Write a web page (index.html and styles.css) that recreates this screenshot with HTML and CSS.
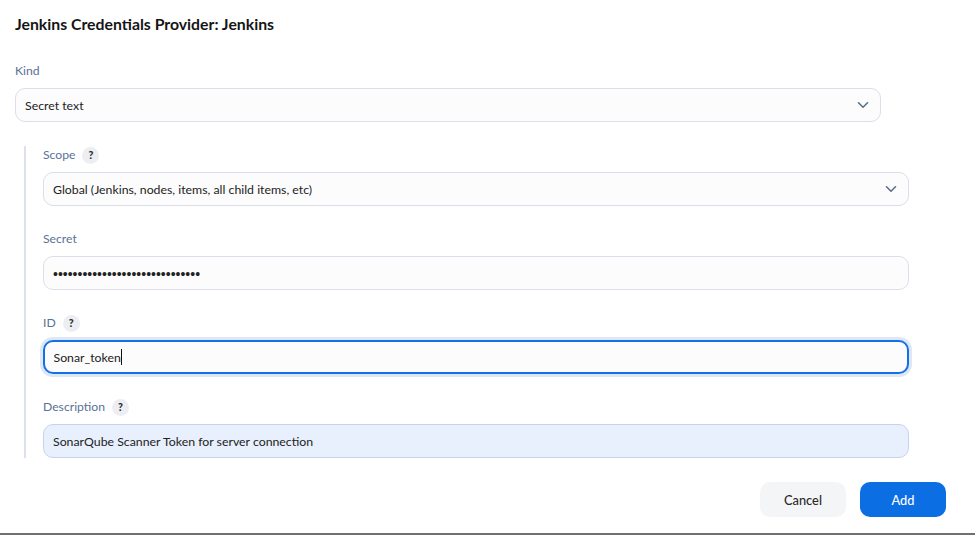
FILE: index.html
```html
<!DOCTYPE html>
<html lang="en">
<head>
<meta charset="utf-8">
<title>Jenkins Credentials Provider</title>
<link rel="stylesheet" href="styles.css">
</head>
<body>
<div class="dialog">
  <h1 class="title">Jenkins Credentials Provider: Jenkins</h1>
  <div class="form">
    <div class="field">
      <div class="label">Kind</div>
      <div class="control select">
        <span>Secret text</span>
        <svg class="chev" width="12" height="8" viewBox="0 0 12 8"><path d="M1.5 1.8 L6 6.2 L10.5 1.8" fill="none" stroke="#5b6f8e" stroke-width="1.6" stroke-linecap="round" stroke-linejoin="round"/></svg>
      </div>
    </div>
    <div class="nested">
      <div class="field">
        <div class="label">Scope <span class="help">?</span></div>
        <div class="control select">
          <span>Global (Jenkins, nodes, items, all child items, etc)</span>
          <svg class="chev" width="12" height="8" viewBox="0 0 12 8"><path d="M1.5 1.8 L6 6.2 L10.5 1.8" fill="none" stroke="#5b6f8e" stroke-width="1.6" stroke-linecap="round" stroke-linejoin="round"/></svg>
        </div>
      </div>
      <div class="field">
        <div class="label">Secret</div>
        <div class="control"><span class="dots">••••••••••••••••••••••••••••••</span></div>
      </div>
      <div class="field">
        <div class="label">ID <span class="help">?</span></div>
        <div class="control focused"><span>Sonar_token</span><span class="caret"></span></div>
      </div>
      <div class="field">
        <div class="label">Description <span class="help">?</span></div>
        <div class="control autofill"><span>SonarQube Scanner Token for server connection</span></div>
      </div>
    </div>
  </div>
  <div class="buttons">
    <button class="btn cancel">Cancel</button>
    <button class="btn add">Add</button>
  </div>
</div>
</body>
</html>
```
FILE: styles.css
```css
* { box-sizing: border-box; }
html, body { margin: 0; padding: 0; background: #fff; }
body {
  font-family: Lato, "Noto Sans", "Liberation Sans", sans-serif;
  color: #1f1f1f;
}
.dialog {
  height: 535px;
  border-bottom: 2px solid #707070;
  padding: 14px 0 0 15px;
  display: flex;
  flex-direction: column;
}
.title {
  margin: 0;
  font-size: 15.8px;
  font-weight: 700;
  line-height: 20px;
  color: #151515;
}
.form {
  margin-top: 28px;
  width: 895px;
  display: flex;
  flex-direction: column;
  gap: 24px;
}
.field {
  display: flex;
  flex-direction: column;
  width: 866px;
}
.label {
  height: 18px;
  line-height: 18px;
  font-size: 12.2px;
  color: #5a7296;
  margin-bottom: 8px;
  display: flex;
  align-items: center;
  gap: 7px;
}
.help {
  width: 17px;
  height: 17px;
  border-radius: 50%;
  background: #eceef3;
  color: #2a2a2a;
  font-size: 10.5px;
  font-weight: 900;
  display: inline-flex;
  align-items: center;
  justify-content: center;
  line-height: 1;
}
.control {
  height: 34px;
  border: 1.5px solid #d9e0ea;
  border-radius: 10px;
  background: #fcfcfd;
  display: flex;
  align-items: center;
  padding: 0 9px;
  font-size: 12.3px;
  color: #222;
}
.control > span:first-child { padding-top: 1px; }
.select { justify-content: space-between; padding-right: 11px; }
.chev { display: block; }
.dots {
  font-family: "Liberation Sans", sans-serif;
  font-size: 14px;
  letter-spacing: 0;
  color: #222;
}
.focused {
  border: 2px solid #1570e6;
  box-shadow: 0 0 0 3px #dce8f8;
  padding-left: 8.5px;
}
.caret {
  width: 1px;
  height: 16px;
  background: #111;
  margin-left: 0;
}
.autofill {
  background: #e8f0fd;
  border-color: #c6d4ea;
}
.nested {
  margin-left: 9px;
  border-left: 2px solid #dde2ea;
  padding-left: 17px;
  display: flex;
  flex-direction: column;
  gap: 24px;
}
.buttons {
  margin-top: 24px;
  width: 931px;
  display: flex;
  justify-content: flex-end;
  gap: 14px;
}
.btn {
  width: 86px;
  height: 35px;
  border: none;
  border-radius: 10px;
  font-family: Lato, "Noto Sans", "Liberation Sans", sans-serif;
  font-size: 12.8px;
  font-weight: 500;
}
.cancel { background: #f4f5f7; color: #2a2a2a; }
.add { background: #0b6ee3; color: #fff; }
```
